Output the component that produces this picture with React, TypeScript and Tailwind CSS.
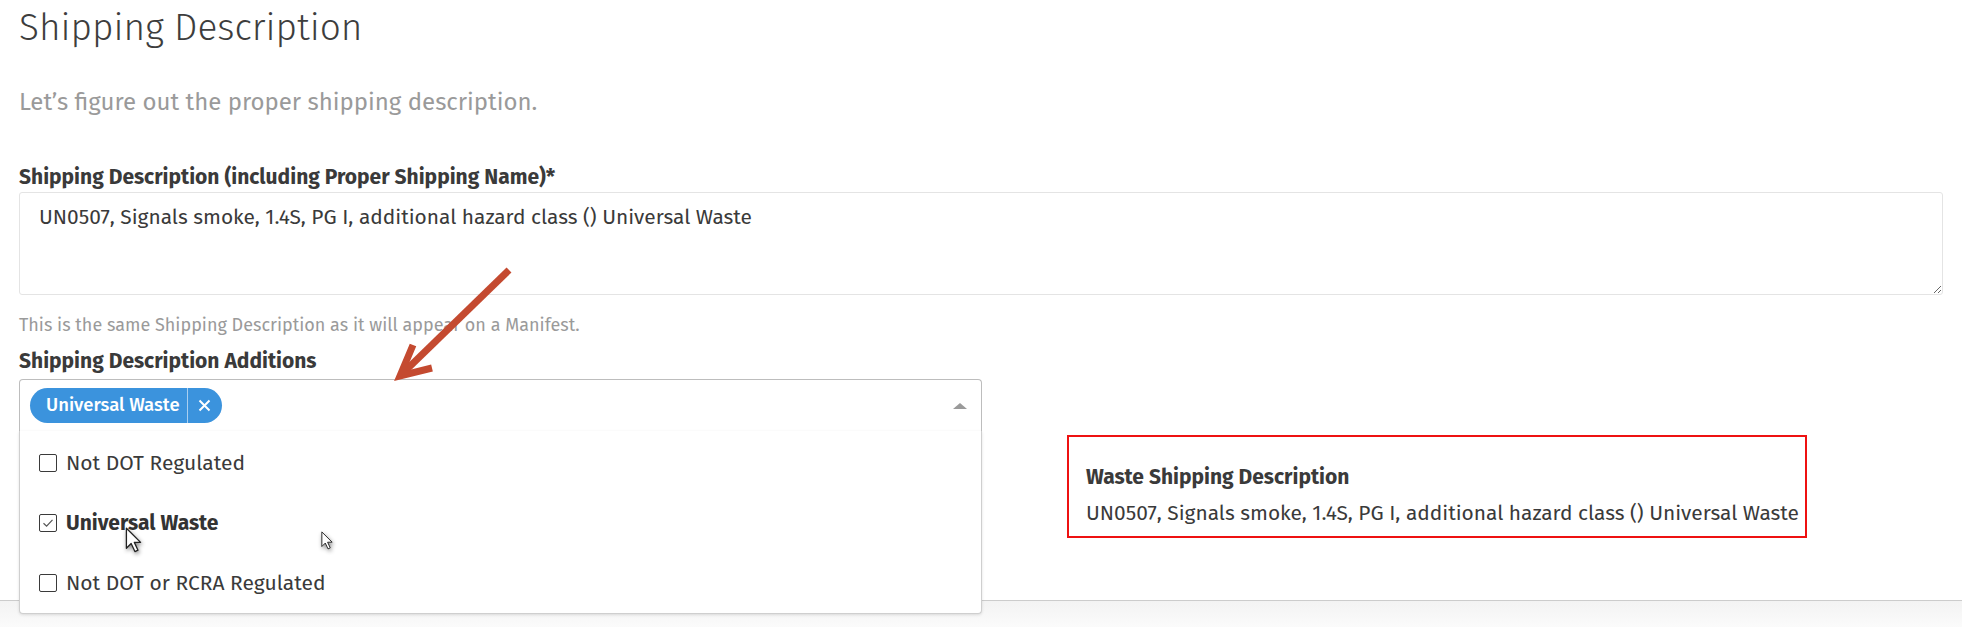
const font = { fontFamily: '"Fira Sans", "Open Sans", "Noto Sans", sans-serif' };

const options = [
  { label: "Not DOT Regulated", checked: false },
  { label: "Universal Waste", checked: true },
  { label: "Not DOT or RCRA Regulated", checked: false },
];

function Checkbox({ checked }: { checked: boolean }) {
  return (
    <span className="flex h-[18px] w-[18px] shrink-0 items-center justify-center rounded-[2px] border-[1.5px] border-[#3a3a3a] bg-white">
      {checked && (
        <svg width="12" height="10" viewBox="0 0 12 10" fill="none">
          <path d="M1.5 5.2 4.6 8.2 10.5 1.8" stroke="#555" strokeWidth="1.2" />
        </svg>
      )}
    </span>
  );
}

function Cursor({ className }: { className: string }) {
  return (
    <svg className={className} viewBox="0 0 14 22" fill="none">
      <path
        d="M1 1v17l4-4 3.2 6.8 2.6-1.2L7.7 13H13z"
        fill="#fff"
        stroke="#222"
        strokeWidth="1.1"
        strokeLinejoin="round"
      />
    </svg>
  );
}

export default function App() {
  return (
    <div className="relative flex h-[627px] w-full flex-col overflow-hidden bg-white text-[#333]" style={font}>
      <div className="h-[600px] shrink-0 px-[19px]">
        {/* header */}
        <h1 className="mt-[4px] text-[37px] font-light leading-[48px] text-[#3d3d3d]">Shipping Description</h1>
        <p className="mt-[34px] text-[24px] leading-[32px] text-[#9a9a9a]">Let’s figure out the proper shipping description.</p>

        {/* shipping description */}
        <label className="mt-[45px] block text-[21px] font-bold leading-[28px] text-[#3a3a3a]">
          Shipping Description (including Proper Shipping Name)*
        </label>
        <textarea
          readOnly
          defaultValue="UN0507, Signals smoke, 1.4S, PG I, additional hazard class () Universal Waste"
          className="mt-[1px] block h-[103px] w-full rounded-[3px] border border-[#e4e4e4] px-[19px] py-[10px] text-[20.9px] leading-[28px] text-[#3a3a3a] outline-none"
        />
        <p className="mt-[18px] text-[18px] leading-[24px] text-[#9a9a9a]">
          This is the same Shipping Description as it will appear on a Manifest.
        </p>

        {/* additions */}
        <label className="mt-[10px] block text-[21px] font-bold leading-[28px] text-[#3a3a3a]">
          Shipping Description Additions
        </label>
        <div className="mt-[4px] flex items-start">
          <div className="relative w-[963px] shrink-0">
            <div className="flex h-[53px] items-center rounded-t-[4px] border border-b-[#e6e6e6] border-[#bdbdbd] pl-[10px] pr-[14px]">
              <span className="flex h-[35px] items-center rounded-full bg-[#3b93dd] text-white">
                <span className="pl-[16px] pr-[7px] text-[18.5px] font-medium leading-none">Universal Waste</span>
                <span className="flex h-full w-[35px] items-center justify-center border-l border-[#a9cff0]">
                  <svg width="13" height="13" viewBox="0 0 13 13">
                    <path d="M1.5 1.5 11.5 11.5M11.5 1.5 1.5 11.5" stroke="#fff" strokeWidth="2" />
                  </svg>
                </span>
              </span>
              <span className="ml-auto h-0 w-0 border-x-[7px] border-b-[6px] border-x-transparent border-b-[#9a9a9a]" />
            </div>
            <div className="absolute left-0 right-0 top-[52px] z-10 rounded-b-[4px] border border-t-0 border-[#cfcfcf] bg-white pt-[2px] shadow-[0_1px_3px_rgba(0,0,0,0.12)]">
              {options.map((o) => (
                <div key={o.label} className="flex h-[60px] items-center gap-[9px] pl-[19px]">
                  <Checkbox checked={o.checked} />
                  <span className={`text-[21px] leading-none ${o.checked ? "font-bold text-[#333]" : "text-[#3a3a3a]"}`}>
                    {o.label}
                  </span>
                </div>
              ))}
            </div>
          </div>

          <div className="ml-[85px] mt-[56px] w-[740px] whitespace-nowrap border-2 border-[#ee1111] pb-[9px] pl-[17px] pr-[2px] pt-[26px]">
            <div className="text-[21px] font-bold leading-[28px] text-[#3a3a3a]">Waste Shipping Description</div>
            <div className="mt-[8px] text-[20.9px] leading-[28px] text-[#3a3a3a]">
              UN0507, Signals smoke, 1.4S, PG I, additional hazard class () Universal Waste
            </div>
          </div>
        </div>
      </div>

      {/* footer strip */}
      <div className="flex-1 border-t border-[#cccccc] bg-gradient-to-b from-[#f3f3f3] to-[#fbfbfb]" />

      {/* annotation arrow */}
      <svg className="pointer-events-none absolute left-0 top-0 z-20" width="600" height="400" viewBox="0 0 600 400">
        <g stroke="#c44a30" strokeWidth="7" fill="none">
          <path d="M509 270 402 374" />
          <path d="M413 345 400 376 432 368" strokeLinejoin="miter" />
        </g>
      </svg>

      {/* mouse pointers */}
      <Cursor className="absolute left-[125px] top-[527px] z-20 h-[26px] w-[17px] drop-shadow-[1px_2px_2px_rgba(0,0,0,0.45)]" />
      <Cursor className="absolute left-[321px] top-[531px] z-20 h-[19px] w-[12px] drop-shadow-[1px_2px_2px_rgba(0,0,0,0.45)]" />
    </div>
  );
}
